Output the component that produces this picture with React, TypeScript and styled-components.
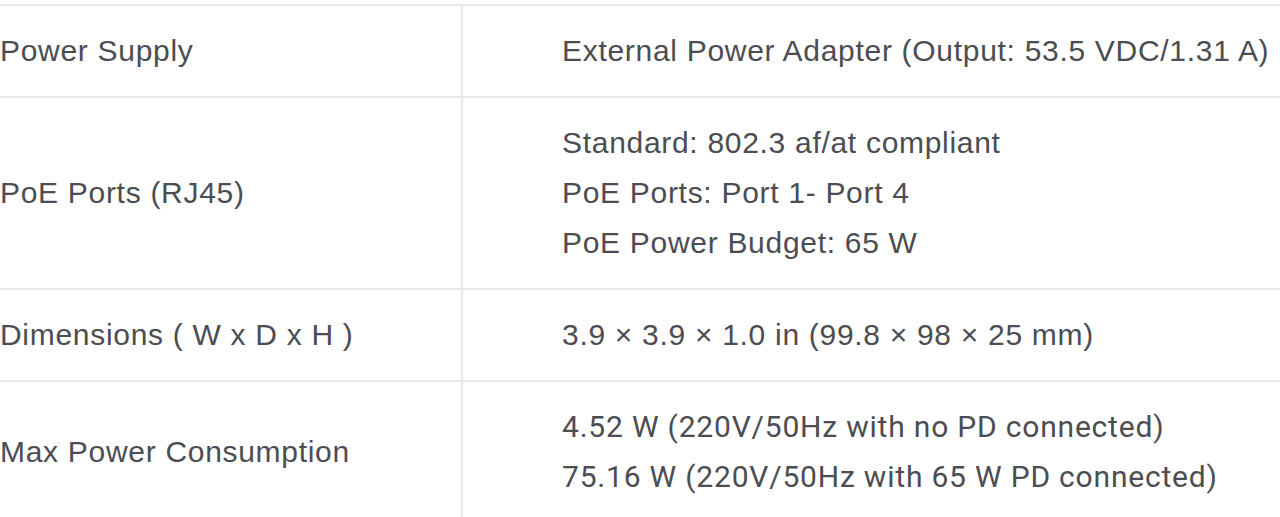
import React from "react";
import styled, { createGlobalStyle } from "styled-components";

const Global = createGlobalStyle`
  html, body { margin: 0; padding: 0; background: #ffffff; }
  body { font-family: "Liberation Sans", Arial, sans-serif; }
`;

const Table = styled.div`
  width: 1280px;
  padding-top: 4px;
  display: flex;
  flex-direction: column;
`;

const Row = styled.div`
  display: grid;
  grid-template-columns: 463px 1fr;
  border-top: 2px solid #e8e8ec;
`;

const Label = styled.div`
  display: flex;
  align-items: center;
  padding: 20px 0;
  border-right: 2px solid #e8e8ec;
  font-size: 30px;
  letter-spacing: 0.7px;
  line-height: 50px;
  color: #4b4d52;
  white-space: nowrap;
`;

const Value = styled.div<{ $narrow?: boolean }>`
  display: flex;
  flex-direction: column;
  justify-content: center;
  padding: 20px 0 20px 99px;
  font-family: ${(p) => (p.$narrow ? `Roboto, "Liberation Sans", sans-serif` : `"Liberation Sans", Arial, sans-serif`)};
  font-size: 30px;
  letter-spacing: ${(p) => (p.$narrow ? "0.8px" : "0.7px")};
  line-height: 50px;
  color: #4b4d52;
  white-space: nowrap;
`;

const rows: { label: string; values: string[]; narrow?: boolean }[] = [
  { label: "Power Supply", values: ["External Power Adapter (Output: 53.5 VDC/1.31 A)"] },
  {
    label: "PoE Ports (RJ45)",
    values: ["Standard: 802.3 af/at compliant", "PoE Ports: Port 1- Port 4", "PoE Power Budget: 65 W"],
  },
  { label: "Dimensions ( W x D x H )", values: ["3.9 × 3.9 × 1.0 in (99.8 × 98 × 25 mm)"] },
  {
    label: "Max Power Consumption",
    values: ["4.52 W (220V/50Hz with no PD connected)", "75.16 W (220V/50Hz with 65 W PD connected)"],
    narrow: true,
  },
];

export default function App() {
  return (
    <>
      <Global />
      <Table>
        {rows.map((r) => (
          <Row key={r.label}>
            <Label>{r.label}</Label>
            <Value $narrow={r.narrow}>
              {r.values.map((v) => (
                <span key={v}>{v}</span>
              ))}
            </Value>
          </Row>
        ))}
      </Table>
    </>
  );
}
